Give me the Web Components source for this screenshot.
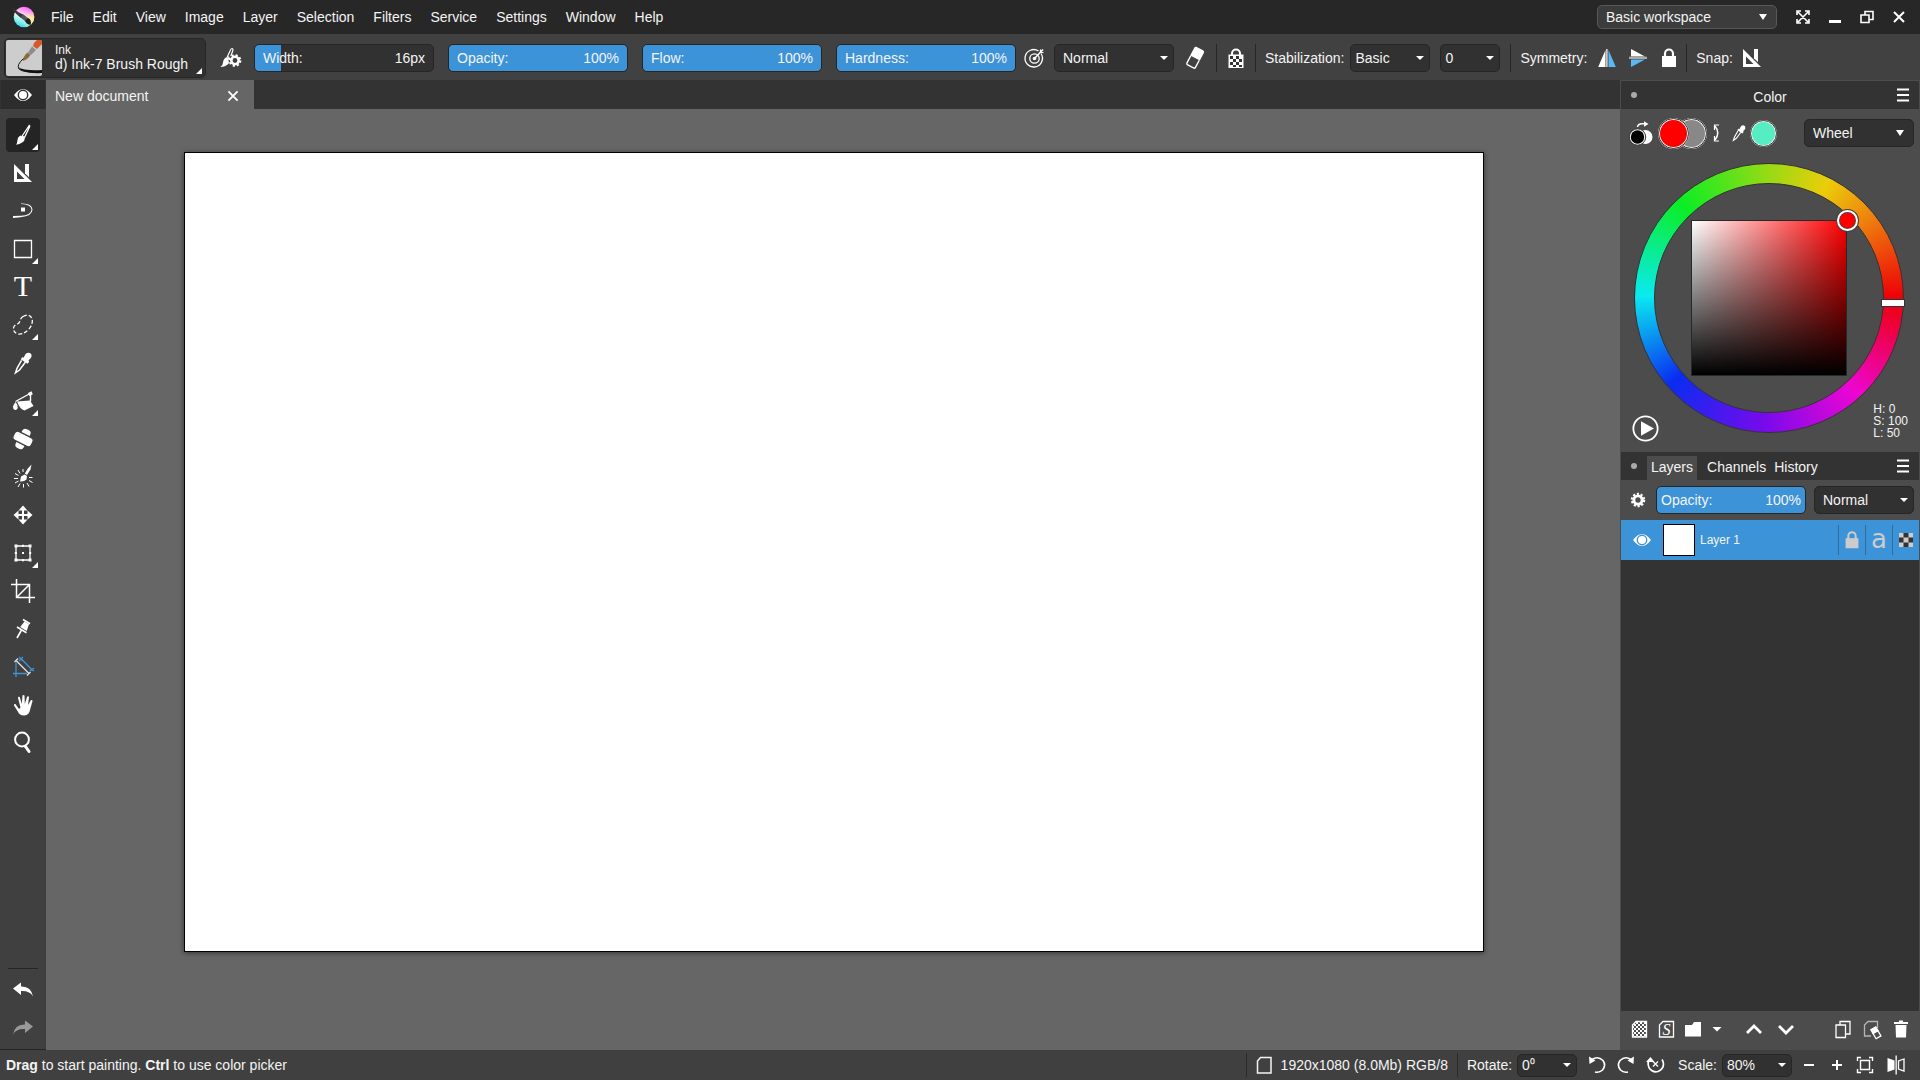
<!DOCTYPE html>
<html lang="en">
<head>
<meta charset="utf-8">
<title>New document</title>
<style>
  html, body {
    margin: 0;
    height: 100%;
    background: #404040;
  }
  body {
    font: 14px/16px "Liberation Sans", Arial, sans-serif;
    color: #f4f4f4;
    overflow: hidden;
  }
</style>
</head>
<body>
<paint-app></paint-app>

<script>
// every icon is drawn on a 24x24 grid
const ICONS = {
  logo: `<defs>
      <linearGradient id="a" x1="0.7" y1="0" x2="0.3" y2="1"><stop offset="0.05" stop-color="#f6f"/><stop offset="0.5" stop-color="#fdf3e6"/><stop offset="0.75" stop-color="#7df5ee"/><stop offset="1" stop-color="#3cc8ff"/></linearGradient>
      <radialGradient id="b" cx="0.95" cy="0.7" r="0.5"><stop offset="0" stop-color="#fff27a"/><stop offset="1" stop-color="#fff27a" stop-opacity="0"/></radialGradient>
    </defs>
    <circle cx="12" cy="12" r="10.3" fill="url(#a)"/><circle cx="12" cy="12" r="10.3" fill="url(#b)"/>
    <path d="M0 2 Q2 8 9 13 L12 10 Q5 7 0 2Z" fill="#36363e"/><path d="M8.500 12.500l3-3 5 4 -3 3Z" fill="#55555f"/><path d="M13 16l3-3q4 1.500 2.500 7q-4-.5-5.500-4Z" fill="#1e1e26"/>`,
  expand: `<path d="M6 10V6h4M14 6h4v4M18 14v4h-4M10 18H6v-4M7 7l10 10M17 7L7 17" fill="none" stroke="currentColor" stroke-width="1.6"/>`,
  minimize: `<path d="M6 15h12v3H6z"/>`,
  restore: `<path d="M6 10h8v7.5H6zM10 9.500V6.500h8v8h-4" fill="none" stroke="currentColor" stroke-width="1.6"/>`,
  close: `<path d="M7 7l10 10M17 7L7 17" fill="none" stroke="currentColor" stroke-width="2"/>`,
  brushGear: `<path d="M14 2.500q1.500.3.700 2.500L12 12l-2.500-1.500 2.500-5.500q1-2.500 2-2.500Z" fill="none" stroke="currentColor" stroke-width="1.200"/><path d="M9 11l3 1.500q.500 4-3 6.500-3 2.200-6.500 2 2.500-2 2.500-4.500.5-4.500 4-5.500Z"/>
    <circle cx="17" cy="14.500" r="4" fill="none" stroke="#414141" stroke-width="5"/>
    <circle cx="17" cy="14.500" r="3.700" fill="none" stroke="currentColor" stroke-width="2.600"/>
    <circle cx="17" cy="14.500" r="5.200" fill="none" stroke="currentColor" stroke-width="2.400" stroke-dasharray="2.040 2.040"/>`,
  target: `<g fill="none" stroke="currentColor"><path d="M18 7.500a8.700 8.700 0 1 1-2.500-2.500" stroke-width="1.300"/><circle cx="11.500" cy="12.500" r="4.700" stroke-width="1.300"/><path d="M11.500 12.500L20 3.500" stroke-width="1.500"/><path d="M17.500 3.500v3h3" stroke-width="1.200"/></g><circle cx="11.500" cy="12.500" r="1.800"/>`,
  eraser: `<g transform="rotate(28 12 12)"><path d="M8.500 1.500h7q2 0 2 2v8.500h-11V3.500q0-2 2-2Z"/><path d="M7.200 12v8q0 1.500 1.500 1.500h6.600q1.500 0 1.500-1.500V12" fill="none" stroke="currentColor" stroke-width="1.400"/></g>`,
  checkerLock: `<path d="M8 9.500V7.500a4 4 0 0 1 8 0v2" fill="none" stroke="currentColor" stroke-width="2"/><path d="M4.500 8.500h15v13.500h-15z"/><path fill="#333" d="M6 10h3v3H6zM12 10h3v3h-3zM9 13h3v3H9zM15 13h3v3h-3zM6 16h3v3H6zM12 16h3v3h-3zM9 19h3v2H9zM15 19h3v2h-3z"/>`,
  symH: `<path d="M10.500 4v17H3.200zM11.300 3h1.200v18h-1.200z"/><path d="M13.500 4v17h7.300z" fill="#5cb8f5"/>`,
  symV: `<path d="M5 3v7.500h14z"/><path d="M3 10.700h18v2.300H3z" fill="#aaa"/><path d="M5 13.500V21l14-7.500z" fill="#5cb8f5"/>`,
  lock: `<path d="M8 11V7.500a4 4 0 0 1 8 0V11" fill="none" stroke="currentColor" stroke-width="2.200"/><path d="M5 10h14v11H5z"/>`,
  ruler: `<path fill-rule="evenodd" d="M3 3l18 18H3zM6 10.500V18h7.500z"/><path d="M14 3h4v13.200l-4-4z"/>`,
  eye: `<path fill-rule="evenodd" d="M3 12Q12 0 21 12 12 24 3 12ZM12 6.600a5.400 5.400 0 1 0 0 10.800 5.400 5.400 0 0 0 0-10.800Z"/><circle cx="12" cy="12" r="4"/>`,
  brush: `<path d="M18.200 2.500l-7 10.500 2.300 1.500L18.500 4q.5-1.500-.3-1.500Z" fill="none" stroke="currentColor" stroke-width="1.300"/><path d="M9.800 12.500l3.800 2.500q.5 3-2.800 4.800-2.300 1.700-5.600 2 1-1.800 1.200-4.200.3-4 3.400-5.100Z"/>`,
  curve: `<path d="M10 4.500q11-.5 11.500 6 0 6.500-12 7.700L2 19v-2l8-.3q10-.6 10.500-6 0-5-10.500-5.700Z"/><path d="M10 8.500h4v4h-4z"/>`,
  rect: `<path d="M3.500 3.500h17v17h-17z" fill="none" stroke="currentColor" stroke-width="1.300"/>`,
  text: `<text x="12" y="21" text-anchor="middle" font-family="Liberation Serif" font-size="30">T</text>`,
  lasso: `<path d="M12 3.500q6-3.500 9 2 1.500 5.500-3.500 11-5.500 5.500-10.500 4.500-5-1.500-4.500-6 .5-2.800 4-4 2-.8 2.500-3.500 .8-2.500 3-4Z" fill="none" stroke="currentColor" stroke-width="1.300" stroke-dasharray="4 2"/>`,
  picker: `<path d="M14 4q1-2.500 4-2.300 3 .8 2.500 3.800-.5 2-3 3.700l.7 1.600-1.700 2-6.800-4.600 1.500-2 1.600.4Z"/><path d="M10.500 9.300l-4.500 8-1.500 4.500 4-2.800 6-8" fill="none" stroke="currentColor" stroke-width="1.500"/>`,
  fill: `<path d="M6 12.500L19 11.500l3.500 5.500-9 4.500q-4.500-1-7.500-9Z"/><path d="M4.500 12.500L20 4M19.500 4v8.500" fill="none" stroke="currentColor" stroke-width="1.400"/><path d="M17 4l3.500-1.700 1.300 2.900-3.500 1.700Z"/><path d="M4.800 13q2.300 3 1.900 6-.7 2.300-2.700 2-2.200-.5-2-3.500Q2.800 14.500 4.800 13Z"/>`,
  patch: `<g transform="rotate(27 12 12)"><rect x="7.500" y="1.500" width="9" height="21" rx="3.500"/><rect x="1.800" y="7" width="20.400" height="10" rx="3.500" stroke="#404040" stroke-width="1.400"/></g>`,
  spark: `<path d="M20.500 -.5l-1 5-3.500 5.500-2.200-1.500 3-5ZM10 11.500l3.500-2 2.500 1.500-.5 3.500q-2.500 2.500-6.500 2Z"/><path d="M12 7V4M9 8.500L7 5M7.500 10.500L4 8.500M7 13.500H3M7.500 16L4 18M9 18.500L7 22M12.500 19v3.500M16 18l2 3.500M18 15.500l3.500 2M18 12.500h3.500" stroke="currentColor" stroke-width="1"/>`,
  move: `<path d="M12 5v14M5 12h14" stroke="currentColor" stroke-width="2"/><path d="M12 2.500l4.500 5h-9zM12 21.500l4.500-5h-9zM2.500 12l5-4.500v9zM21.500 12l-5-4.500v9z"/>`,
  transform: `<path d="M5 5h14v14H5z" fill="none" stroke="currentColor" stroke-width="1.300"/><path d="M3.500 3.500h3v3h-3zM17.500 3.500h3v3h-3zM3.500 17.500h3v3h-3zM17.500 17.500h3v3h-3zM11 3.800h2v2h-2zM11 18.200h2v2h-2zM3.800 11h2v2h-2zM18.200 11h2v2h-2zM11 11h2v2h-2z"/>`,
  crop: `<path d="M5.500 0v18.500H24M0 5.500h18.500V24M5.500 18.500l13-13" fill="none" stroke="currentColor" stroke-width="1.500"/>`,
  pin: `<path d="M12 2.500l7 4.300M6 10l9.500 5.800M10.500 13L6 21" fill="none" stroke="currentColor" stroke-width="1.600"/><path d="M13.500 4.500l4.500 2.800-2.300 6.700-6.500-4Z"/>`,
  assist: `<path d="M5 7.500V22M2 18.500h14M10 3.500l11.500 12M8 6l4-4M8 2l4 4M19 16l4-3M19 13l4 3" fill="none" stroke="#3d93d8" stroke-width="1.300"/><path d="M5.500 6l12.500 12.500M3.500 7L7 3.500M16 20.500l3.500-3.500" fill="none" stroke="#ddd" stroke-width="1.400"/>`,
  hand: `<path d="M9.500 14.500L7 5q0-1.800 1.800-1L10.800 11l.7-8.500q1-1.200 2 0l.3 8.500 2.400-7.500q1.500-1 1.800.7L17 12l3-5q1.600-.5 1.500 1.300l-2.300 8q-1 6-5.700 6.200-5 .3-6.700-4L3 12.500q-.3-1.800 1.400-1.400l3.600 5Z"/>`,
  zoom: `<circle cx="11" cy="8.500" r="6.900" fill="none" stroke="currentColor" stroke-width="2"/><path d="M14.500 15.500l3.500 5" stroke="currentColor" stroke-width="3" stroke-linecap="round"/>`,
  undo: `<path d="M2 10.500L10 4.500v4q10-.5 12 10-3-6-12-5.500v4Z"/>`,
  redo: `<path d="M22 10.500L14 4.500v4q-10-.5-12 10 3-6 12-5.500v4Z"/>`,
  menu: `<path d="M6 5.500h12v2H6zM6 11h12v2H6zM6 16.500h12v2H6z"/>`,
  blackWhite: `<path d="M8.500 6Q9 2.800 13 2.800h3" fill="none" stroke="currentColor" stroke-width="1.500"/><path d="M15 .2L19.500 3 15 5.800Z"/><circle cx="16.500" cy="16" r="7" fill="#fff"/><circle cx="8.500" cy="16" r="8.200" fill="#fff" stroke="#333"/><circle cx="8.500" cy="16" r="6.700" fill="#000"/>`,
  swap: `<path d="M10 5q5.500 7 0 14" fill="none" stroke="currentColor" stroke-width="1.500"/><path d="M9.500 9V4H14M9.500 15v5H14" fill="none" stroke="currentColor" stroke-width="1.200"/>`,
  play: `<circle cx="12" cy="12" r="10.800" fill="none" stroke="currentColor" stroke-width="1.600"/><path d="M8 5.500L19.500 12 8 18.500Z"/>`,
  gear: `<circle cx="12" cy="12" r="4.500" fill="none" stroke="currentColor" stroke-width="3.200"/><circle cx="12" cy="12" r="6.700" fill="none" stroke="currentColor" stroke-width="2.400" stroke-dasharray="2.340 1.870"/>`,
  checker: `<path fill="#333" d="M5 5h14v14H5z"/><path fill="#ccc" d="M5 5h4.500v4.500H5zM14.500 5H19v4.500h-4.500zM9.500 9.500h5v5h-5zM5 14.500h4.500V19H5zM14.500 14.500H19V19h-4.500z"/>`,
  checkDoc: `<defs><pattern id="p" width="4" height="4" patternUnits="userSpaceOnUse" x="1" y="1"><path fill="#fff" d="M0 0h2v2H0zM2 2h2v2H2z"/></pattern></defs><path d="M9 4.500h10.500v15.500h-14V8z" fill="url(#p)" stroke="currentColor" stroke-width="1.300"/>`,
  styleDoc: `<path d="M9 4.500h10.500v15.500h-14V8z" fill="none" stroke="currentColor" stroke-width="1.300"/><text x="12.500" y="17.500" text-anchor="middle" font-family="Liberation Serif" font-style="italic" font-size="16">S</text>`,
  folder: `<path d="M4 8h7l2-3h7v14.500H4z"/>`,
  caret: `<path d="M7.500 10h9L12 14.500z"/>`,
  up: `<path d="M5 16l7-7 7 7" fill="none" stroke="currentColor" stroke-width="2.800"/>`,
  down: `<path d="M5 9l7 7 7-7" fill="none" stroke="currentColor" stroke-width="2.800"/>`,
  copy: `<path d="M5 8h9.500v12.500H5zM9 8V4.500h10V17h-4.500" fill="none" stroke="currentColor" stroke-width="1.300"/>`,
  clearDoc: `<path d="M11 19H4.500V8L8 4.500h9.500V11" fill="none" stroke="#b5b5b5" stroke-width="1.300"/><g transform="rotate(-30 16 16)"><path d="M12.500 10h7v5.500h-7z"/><path d="M13.200 15h5.600v6h-5.600z" fill="none" stroke="currentColor" stroke-width="1.300"/></g>`,
  trash: `<path d="M5 5h14v2H5zM10 3.500h4V5h-4zM6.500 8h11l-.5 12.500H7z"/>`,
  doc: `<path d="M8.500 4.500H19V20H5.500V8z" fill="none" stroke="currentColor" stroke-width="1.500"/>`,
  rotL: `<path d="M7 6.500Q13 2.500 18 7.500q3.500 5-.5 9.500-3 3-7.500 2" fill="none" stroke="currentColor" stroke-width="1.600"/><path d="M4 3.500l.5 7.500 6-3.500Z"/>`,
  rotR: `<path d="M17 6.500Q11 2.500 6 7.500q-3.500 5 .5 9.500 3 3 7.500 2" fill="none" stroke="currentColor" stroke-width="1.600"/><path d="M20 3.500l-.5 7.500-6-3.500Z"/>`,
  rotReset: `<path d="M6 7Q4 11 6.500 15.500q3.500 4.500 8.500 3 5.500-2.500 5.500-7.500 0-2.500-1.500-4.500" fill="none" stroke="currentColor" stroke-width="1.700"/><path d="M3 9l4.500-5 4 5Z"/><path d="M10 8.500l5 5M15 8.500l-5 5" stroke="currentColor" stroke-width="1.300"/>`,
  minus: `<path d="M7 11h10v2H7z"/>`,
  plus: `<path d="M7 11h10v2H7zM11 7h2v10h-2z"/>`,
  fit: `<path d="M7.500 7.500h9v9h-9zM4.500 8V4.500H8M16 4.500h3.500V8M19.500 16v3.500H16M8 19.500H4.500V16" fill="none" stroke="currentColor" stroke-width="1.400"/>`,
  mirror: `<path d="M3.500 5l7 2.500v9l-7 2.500zM11.500 2.500h1.300v19h-1.300z"/><path d="M20 6l-5.500 2v8l5.500 2z" fill="none" stroke="currentColor" stroke-width="1.300"/>`
};

function define(name, html, setup) {
  const template = document.createElement('template');
  template.innerHTML = html;

  customElements.define(name, class extends HTMLElement {
    constructor() {
      super();
      this.attachShadow({ mode: 'open' });
      this.shadowRoot.appendChild(template.content.cloneNode(true));
    }

    connectedCallback() {
      if (setup) setup(this, this.shadowRoot);
    }
  });
}

define('ui-icon', `
  <style>
  :host { display: block; flex: none; width: var(--icon, 24px); height: var(--icon, 24px); }
  svg { display: block; width: 100%; height: 100%; overflow: visible; fill: currentColor; }
  </style>
  <svg viewBox="0 0 24 24" aria-hidden="true"></svg>
`, (host, root) => {
  root.querySelector('svg').innerHTML = ICONS[host.getAttribute('name')];
});

define('icon-button', `
  <style>
  :host { display: block; flex: none; width: var(--w, 32px); height: var(--h, 28px); }
  button {
    position: relative;
    display: flex;
    align-items: center;
    justify-content: center;
    width: 100%;
    height: 100%;
    padding: 0;
    border: 0;
    border-radius: 4px;
    background: none;
    color: #fff;
  }
  :host([active]) button { background: #242424; }
  :host([dim]) button { color: #999; }
  :host([corner]) button::after {
    content: '';
    position: absolute;
    right: 2px;
    bottom: 2px;
    border: 3px solid transparent;
    border-right-color: #fff;
    border-bottom-color: #fff;
  }
  </style>
  <button type="button"><ui-icon></ui-icon></button>
`, (host, root) => {
  root.querySelector('ui-icon').setAttribute('name', host.getAttribute('icon'));
  const button = root.querySelector('button');
  button.setAttribute('aria-label', host.getAttribute('label'));
  // reconnect the icon so that it picks up its name
  button.appendChild(root.querySelector('ui-icon'));
});

define('ui-select', `
  <style>
  :host { display: block; flex: none; position: relative; width: var(--w, 120px); height: var(--h, 28px); }
  select {
    appearance: none;
    box-sizing: border-box;
    width: 100%;
    height: 100%;
    padding: 0 20px 0 var(--pad, 8px);
    border: 1px solid #262626;
    border-radius: 5px;
    background: #313131;
    color: #f4f4f4;
    font: inherit;
  }
  i {
    position: absolute;
    top: 50%;
    right: 6px;
    margin-top: -2px;
    border: 4px solid transparent;
    border-top-color: #fff;
    border-bottom: 0;
    pointer-events: none;
  }
  :host([tall]) i { right: 10px; margin-top: -3px; border-top-width: 6px; }
  :host([light]) select { background: #3c3c3c; border-color: #585858; }
  </style>
  <select></select><i></i>
`, (host, root) => {
  const select = root.querySelector('select');
  select.setAttribute('aria-label', host.getAttribute('label'));
  select.innerHTML = `<option>${host.getAttribute('value')}</option>`;
});

define('ui-slider', `
  <style>
  :host { display: grid; flex: none; width: var(--w, 180px); height: var(--h, 28px); }
  input, label { grid-area: 1 / 1; }
  input {
    appearance: none;
    box-sizing: border-box;
    width: 100%;
    height: 100%;
    margin: 0;
    border: 1px solid #262626;
    border-radius: 5px;
    background: linear-gradient(90deg, #3d93d8 var(--fill), #313131 var(--fill));
  }
  input::-webkit-slider-thumb { appearance: none; width: 1px; height: 1px; }
  label {
    z-index: 1;
    display: flex;
    align-items: center;
    justify-content: space-between;
    padding: 0 var(--pad, 9px);
    pointer-events: none;
  }
  </style>
  <input id="range" type="range">
  <label for="range"><span class="name"></span><span class="value"></span></label>
`, (host, root) => {
  const input = root.querySelector('input');
  const unit = host.getAttribute('unit');
  input.max = host.getAttribute('max');
  input.value = host.getAttribute('value');
  root.querySelector('.name').textContent = host.getAttribute('label') + ':';

  const update = () => {
    root.querySelector('.value').textContent = input.value + unit;
    input.style.setProperty('--fill', input.value / input.max * 100 + '%');
  };
  input.addEventListener('input', update);
  update();
});

define('menu-bar', `
  <style>
  :host {
    display: flex;
    align-items: center;
    height: 34px;
    padding: 0 5px 0 12px;
    background: #272727;
  }
  nav { display: flex; gap: 19px; margin: 0 auto 0 15px; }
  nav a { color: inherit; text-decoration: none; }
  ui-select { --w: 180px; --h: 24px; margin-right: 10px; }
  </style>
  <ui-icon name="logo"></ui-icon>
  <nav>
    <a href="#file">File</a><a href="#edit">Edit</a><a href="#view">View</a><a href="#image">Image</a>
    <a href="#layer">Layer</a><a href="#selection">Selection</a><a href="#filters">Filters</a>
    <a href="#service">Service</a><a href="#settings">Settings</a><a href="#window">Window</a><a href="#help">Help</a>
  </nav>
  <ui-select light tall label="Workspace" value="Basic workspace"></ui-select>
  <icon-button icon="expand" label="Full screen"></icon-button>
  <icon-button icon="minimize" label="Minimize"></icon-button>
  <icon-button icon="restore" label="Restore"></icon-button>
  <icon-button icon="close" label="Close"></icon-button>
`);

define('brush-preset', `
  <style>
  :host { display: block; flex: none; width: 202px; height: 40px; }
  button {
    position: relative;
    display: flex;
    align-items: center;
    gap: 13px;
    width: 100%;
    height: 100%;
    padding: 0 1px;
    border: 1px solid #262626;
    border-radius: 5px;
    background: #313131;
    color: inherit;
    font: inherit;
    text-align: left;
  }
  svg { flex: none; width: 36px; height: 36px; }
  small { display: block; font-size: 12px; line-height: 14px; }
  span { display: block; line-height: 15px; }
  button::after {
    content: '';
    position: absolute;
    right: 3px;
    bottom: 3px;
    border: 3px solid transparent;
    border-right-color: #fff;
    border-bottom-color: #fff;
  }
  </style>
  <button type="button">
    <svg viewBox="0 0 36 36" aria-hidden="true">
      <defs><clipPath id="c"><rect width="36" height="36" rx="2"/></clipPath></defs>
      <g clip-path="url(#c)">
        <path fill="#cdcdcd" d="M0 0h36v36H0z"/>
        <path d="M18 18Q10 25 13 29q4 4 24 3" fill="none" stroke="#1c1c1c" stroke-width="1"/>
        <path d="M12 27q6 4 24 3v3q-20 1-24-6Z" fill="#111"/>
        <path d="M36 0h-5q-3 2-4 6l4 3 5-5Z" fill="#d9572a"/>
        <path d="M26 6.500l4 3.500-5 5-3-2.500Z" fill="#8d8d8d"/>
        <path d="M21.500 12.500l3 2.500q-3 5-8 6 1-5 5-8.500Z" fill="#8c6a44"/>
      </g>
    </svg>
    <div><small>Ink</small><span>d) Ink-7 Brush Rough</span></div>
  </button>
`);

define('tool-options', `
  <style>
  :host {
    display: flex;
    align-items: center;
    box-sizing: border-box;
    height: 46px;
    padding: 1px 0 0 4px;
    background: #414141;
    white-space: nowrap;
  }
  .sliders { display: flex; gap: 14px; }
  .group { display: flex; align-items: center; }
  .group + .group { border-left: 1px solid #262626; height: 28px; }
  .text { margin: 0 4px 0 9px; }
  .symmetry { --w: 31px; padding-right: 2px; }
  .wide { --w: 38px; }
  </style>
  <div class="group">
    <brush-preset></brush-preset>
    <icon-button style="--w: 48px" icon="brushGear" label="Brush settings"></icon-button>
    <div class="sliders">
      <ui-slider label="Width" max="109" value="16" unit="px"></ui-slider>
      <ui-slider label="Opacity" max="100" value="100" unit="%"></ui-slider>
      <ui-slider label="Flow" max="100" value="100" unit="%"></ui-slider>
      <ui-slider label="Hardness" max="100" value="100" unit="%"></ui-slider>
    </div>
    <icon-button class="wide" icon="target" label="Pressure"></icon-button>
    <ui-select label="Blending mode" value="Normal"></ui-select>
    <icon-button style="--w: 42px" icon="eraser" label="Eraser mode"></icon-button>
  </div>
  <div class="group"><icon-button class="wide" icon="checkerLock" label="Preserve alpha"></icon-button></div>
  <div class="group">
    <span class="text">Stabilization:</span>
    <ui-select style="--w: 80px; --pad: 4px; margin-left: 2px" label="Stabilization" value="Basic"></ui-select>
    <ui-select style="--w: 60px; --pad: 4px; margin: 0 10px" label="Strength" value="0"></ui-select>
  </div>
  <div class="group symmetry">
    <span class="text">Symmetry:</span>
    <icon-button icon="symH" label="Horizontal mirror"></icon-button>
    <icon-button icon="symV" label="Vertical mirror"></icon-button>
    <icon-button icon="lock" label="Lock symmetry"></icon-button>
  </div>
  <div class="group symmetry">
    <span class="text">Snap:</span>
    <icon-button icon="ruler" label="Snap to assistants"></icon-button>
  </div>
`);

define('document-tabs', `
  <style>
  :host { display: flex; height: 29px; padding-left: 1px; background: #333; }
  .eye { --w: 44px; --h: 29px; background: #2d2d2d; margin-right: 1px; }
  .tab {
    display: flex;
    align-items: center;
    justify-content: space-between;
    width: 208px;
    box-sizing: border-box;
    padding: 2px 5px 0 9px;
    background: #666;
  }
  </style>
  <icon-button class="eye" icon="eye" label="Show panels"></icon-button>
  <div class="tab"><span>New document</span><icon-button style="--icon: 22px" icon="close" label="Close document"></icon-button></div>
`);

define('tool-box', `
  <style>
  :host {
    display: flex;
    flex-direction: column;
    justify-content: space-between;
    flex: none;
    width: 46px;
    box-sizing: border-box;
    padding-top: 9px;
    border-bottom: 1px solid #262626;
    background: #404040;
    --w: 34px;
    --h: 34px;
  }
  div { display: flex; flex-direction: column; align-items: center; gap: 4px; }
  .history { margin: 0 8px; padding: 4px 0; border-top: 1px solid #262626; }
  </style>
  <div>
    <icon-button icon="brush" label="Brush" active corner></icon-button>
    <icon-button icon="ruler" label="Ruler"></icon-button>
    <icon-button icon="curve" label="Dynamic curve"></icon-button>
    <icon-button icon="rect" label="Shape" corner></icon-button>
    <icon-button icon="text" label="Text"></icon-button>
    <icon-button icon="lasso" label="Lasso" corner></icon-button>
    <icon-button icon="picker" label="Color picker"></icon-button>
    <icon-button icon="fill" label="Fill" corner></icon-button>
    <icon-button icon="patch" label="Smart patch"></icon-button>
    <icon-button icon="spark" label="Colorize"></icon-button>
    <icon-button icon="move" label="Move"></icon-button>
    <icon-button icon="transform" label="Transform" corner></icon-button>
    <icon-button icon="crop" label="Crop"></icon-button>
    <icon-button icon="pin" label="Reference"></icon-button>
    <icon-button icon="assist" label="Measure"></icon-button>
    <icon-button icon="hand" label="Pan"></icon-button>
    <icon-button icon="zoom" label="Zoom"></icon-button>
  </div>
  <div class="history">
    <icon-button icon="undo" label="Undo"></icon-button>
    <icon-button icon="redo" label="Redo" dim></icon-button>
  </div>
`);

define('paint-canvas', `
  <style>
  :host {
    display: flex;
    flex: 1;
    box-sizing: border-box;
    padding: 43px 136px 98px 138px;
    background: #666;
  }
  div { flex: 1; border: 1px solid #000; background: #fff; box-shadow: 0 1px 5px rgba(0, 0, 0, 0.5); }
  </style>
  <div></div>
`);

define('panel-header', `
  <style>
  :host { display: flex; align-items: center; height: 28px; background: #333; }
  .dot { flex: none; width: 6px; height: 6px; margin-left: 10px; border-radius: 50%; background: #aaa; }
  .content { display: flex; flex: 1; align-self: stretch; align-items: center; }
  icon-button { --w: 32px; color: #ccc; }
  </style>
  <span class="dot"></span>
  <div class="content"><slot></slot></div>
  <icon-button icon="menu" label="Panel menu"></icon-button>
`);

define('color-wheel', `
  <style>
  :host { display: block; position: relative; height: 289px; }
  .ring {
    position: relative;
    display: grid;
    place-items: center;
    width: 270px;
    height: 270px;
    margin: 0 15px 0 13px;
  }
  .hue {
    grid-area: 1 / 1;
    width: 268px;
    height: 268px;
    border: 1px solid #333;
    border-radius: 50%;
    background: conic-gradient(from 90deg, #ee0006, #ec06d2 48deg, #780aec 92deg, #0a2cf0 139deg,
      #0aeaf0 181deg, #0aee24 227deg, #98da14 270deg, #ebcd0a 297deg, #ee8c0e 318deg, #ee0006);
  }
  .hole { grid-area: 1 / 1; width: 228px; height: 228px; border: 1px solid #333; border-radius: 50%; background: #4c4c4c; }
  .field {
    grid-area: 1 / 1;
    z-index: 1;
    width: 154px;
    height: 154px;
    border: 1px solid #282828;
    background: linear-gradient(transparent, #000), linear-gradient(90deg, #fff, #f00);
  }
  .knob {
    position: absolute;
    z-index: 2;
    left: 203px;
    top: 47px;
    width: 17px;
    height: 17px;
    border: 2px solid #fff;
    border-radius: 50%;
    background: #f00;
    box-shadow: 0 0 0 1px #444, inset 0 0 0 1px #444;
  }
  .mark {
    position: absolute;
    right: -1px;
    top: 136px;
    width: 22px;
    height: 6px;
    border: 1px solid #333;
    background: #fff;
  }
  icon-button { position: absolute; left: 8px; bottom: 10px; --icon: 27px; }
  .hsl { position: absolute; right: 11px; bottom: 13px; margin: 0; font-size: 12px; line-height: 12px; }
  </style>
  <div class="ring">
    <div class="hue"></div><div class="hole"></div><div class="field"></div>
    <span class="knob"></span><span class="mark"></span>
  </div>
  <icon-button icon="play" label="Show sliders"></icon-button>
  <p class="hsl">H: 0<br>S: 100<br>L: 50</p>
`);

define('color-panel', `
  <style>
  :host { display: block; height: 371px; }
  .title { flex: 1; padding: 3px 0 0 16px; text-align: center; }
  .row { display: flex; align-items: center; height: 48px; padding: 0 5px 0 8px; margin-bottom: 6px; }
  .swatch {
    flex: none;
    width: 31px;
    height: 31px;
    padding: 0;
    border: 2px solid #eee;
    border-radius: 50%;
    outline: 1px solid #383838;
    outline-offset: -1px;
  }
  .fg { z-index: 1; margin-left: 5px; background: #f00; }
  .bg { margin-left: -13px; background: #888; }
  .recent { width: 27px; height: 27px; background: #56edc2; }
  ui-select { --w: 110px; margin-left: auto; }
  </style>
  <panel-header><span class="title">Color</span></panel-header>
  <div class="row">
    <icon-button style="--w: 24px" icon="blackWhite" label="Reset colors"></icon-button>
    <button class="swatch fg" aria-label="Foreground"></button>
    <button class="swatch bg" aria-label="Background"></button>
    <icon-button style="--w: 20px; --icon: 24px" icon="swap" label="Swap colors"></icon-button>
    <icon-button style="--w: 23px; --icon: 18px" icon="picker" label="Pick color"></icon-button>
    <button class="swatch recent" aria-label="Recent color"></button>
    <ui-select tall label="Selector type" value="Wheel"></ui-select>
  </div>
  <color-wheel></color-wheel>
`);

define('layer-row', `
  <style>
  :host {
    display: flex;
    align-items: center;
    height: 40px;
    padding-left: 9px;
    background: #3d93d8;
    font-size: 12px;
  }
  .eye { --w: 24px; }
  .thumb { width: 30px; height: 30px; margin: 0 5px 0 9px; border: 1px solid #000; background: #fff; }
  .flags { display: flex; margin-left: auto; }
  .flags button {
    box-sizing: content-box;
    display: flex;
    align-items: center;
    justify-content: center;
    width: 26px;
    height: 30px;
    padding: 0;
    border: 0;
    border-left: 1px solid #2d6da0;
    background: none;
    color: #ccc;
  }
  .flags .alpha { font: 26px/26px "DejaVu Sans", sans-serif; padding-bottom: 2px; height: 28px; }
  .lock { --icon: 22px; }
  </style>
  <icon-button class="eye" icon="eye" label="Visible"></icon-button>
  <span class="thumb"></span>
  <span><slot></slot></span>
  <div class="flags">
    <button class="lock" aria-label="Lock layer"><ui-icon name="lock"></ui-icon></button>
    <button class="alpha" aria-label="Inherit alpha">a</button>
    <button aria-label="Lock alpha"><ui-icon name="checker"></ui-icon></button>
  </div>
`);

define('layers-panel', `
  <style>
  :host { display: flex; flex: 1; flex-direction: column; }
  .tab { color: inherit; text-decoration: none; line-height: 22px; padding: 0 4px 2px; }
  .tabs { display: flex; align-self: flex-end; margin-left: 10px; }
  .active { margin-right: 6px; background: #4c4c4c; }
  .options { display: flex; align-items: center; height: 40px; padding-right: 5px; }
  .options ui-slider { --w: 150px; --pad: 5px; margin: 0 auto 0 1px; }
  .options ui-select { --w: 100px; }
  .list { flex: 1; background: #333; }
  footer { display: flex; align-items: center; height: 36px; padding: 0 4px 3px 4px; --w: 27px; --h: 36px; }
  .add { display: flex; margin-right: 10px; }
  .order { display: flex; margin-right: auto; --w: 32px; }
  .edit { display: flex; --w: 29px; }
  </style>
  <panel-header>
    <div class="tabs">
      <a class="tab active" href="#layers">Layers</a><a class="tab" href="#channels">Channels</a><a class="tab" href="#history">History</a>
    </div>
  </panel-header>
  <div class="options">
    <icon-button style="--w: 34px; --icon: 22px" icon="gear" label="Layer settings"></icon-button>
    <ui-slider label="Opacity" max="100" value="100" unit="%"></ui-slider>
    <ui-select label="Layer blending" value="Normal"></ui-select>
  </div>
  <div class="list"><layer-row>Layer 1</layer-row></div>
  <footer>
    <div class="add">
      <icon-button icon="checkDoc" label="New layer"></icon-button>
      <icon-button icon="styleDoc" label="New vector layer"></icon-button>
      <icon-button icon="folder" label="New group"></icon-button>
      <icon-button style="--w: 22px" icon="caret" label="More layer types"></icon-button>
    </div>
    <div class="order">
      <icon-button icon="up" label="Move up"></icon-button>
      <icon-button icon="down" label="Move down"></icon-button>
    </div>
    <div class="edit">
      <icon-button icon="copy" label="Duplicate"></icon-button>
      <icon-button icon="clearDoc" label="Clear"></icon-button>
      <icon-button icon="trash" label="Delete"></icon-button>
    </div>
  </footer>
`);

define('status-bar', `
  <style>
  :host {
    display: flex;
    align-items: center;
    height: 30px;
    padding: 0 7px 0 6px;
    background: #404040;
    white-space: nowrap;
  }
  .hint { margin-right: auto; }
  .group { display: flex; align-items: center; height: 24px; border-left: 1px solid #2a2a2a; }
  .info { padding: 0 9px 0 5px; gap: 5px; }
  .rotate { padding-left: 9px; }
  ui-select { --h: 23px; --pad: 4px; margin-left: 5px; }
  .turn { --w: 29px; display: flex; margin: 0 9px 0 5px; }
  .zoom { --w: 28px; display: flex; margin-left: 3px; }
  </style>
  <span class="hint"><b>Drag</b> to start painting. <b>Ctrl</b> to use color picker</span>
  <div class="group info"><ui-icon name="doc"></ui-icon><span>1920x1080 (8.0Mb) RGB/8</span></div>
  <div class="group rotate">
    <span>Rotate:</span>
    <ui-select style="--w: 60px" label="Rotate" value="0⁰"></ui-select>
    <div class="turn">
      <icon-button icon="rotL" label="Rotate left"></icon-button>
      <icon-button icon="rotR" label="Rotate right"></icon-button>
      <icon-button icon="rotReset" label="Reset rotation"></icon-button>
    </div>
    <span>Scale:</span>
    <ui-select style="--w: 70px" label="Scale" value="80%"></ui-select>
    <div class="zoom">
      <icon-button icon="minus" label="Zoom out"></icon-button>
      <icon-button icon="plus" label="Zoom in"></icon-button>
      <icon-button icon="fit" label="Fit to view"></icon-button>
      <icon-button style="--w: 34px" icon="mirror" label="Mirror view"></icon-button>
    </div>
  </div>
`);

define('paint-app', `
  <style>
  :host { display: flex; flex-direction: column; height: 100vh; }
  main { display: flex; flex: 1; min-height: 0; }
  .left { display: flex; flex: 1; flex-direction: column; min-width: 0; }
  .work { display: flex; flex: 1; min-height: 0; }
  aside {
    display: flex;
    flex: none;
    flex-direction: column;
    box-sizing: border-box;
    width: 300px;
    padding: 1px 1px 0;
    background: #4c4c4c;
  }
  </style>
  <menu-bar></menu-bar>
  <tool-options></tool-options>
  <main>
    <div class="left">
      <document-tabs></document-tabs>
      <div class="work"><tool-box></tool-box><paint-canvas></paint-canvas></div>
    </div>
    <aside><color-panel></color-panel><layers-panel></layers-panel></aside>
  </main>
  <status-bar></status-bar>
`);
</script>
</body>
</html>
